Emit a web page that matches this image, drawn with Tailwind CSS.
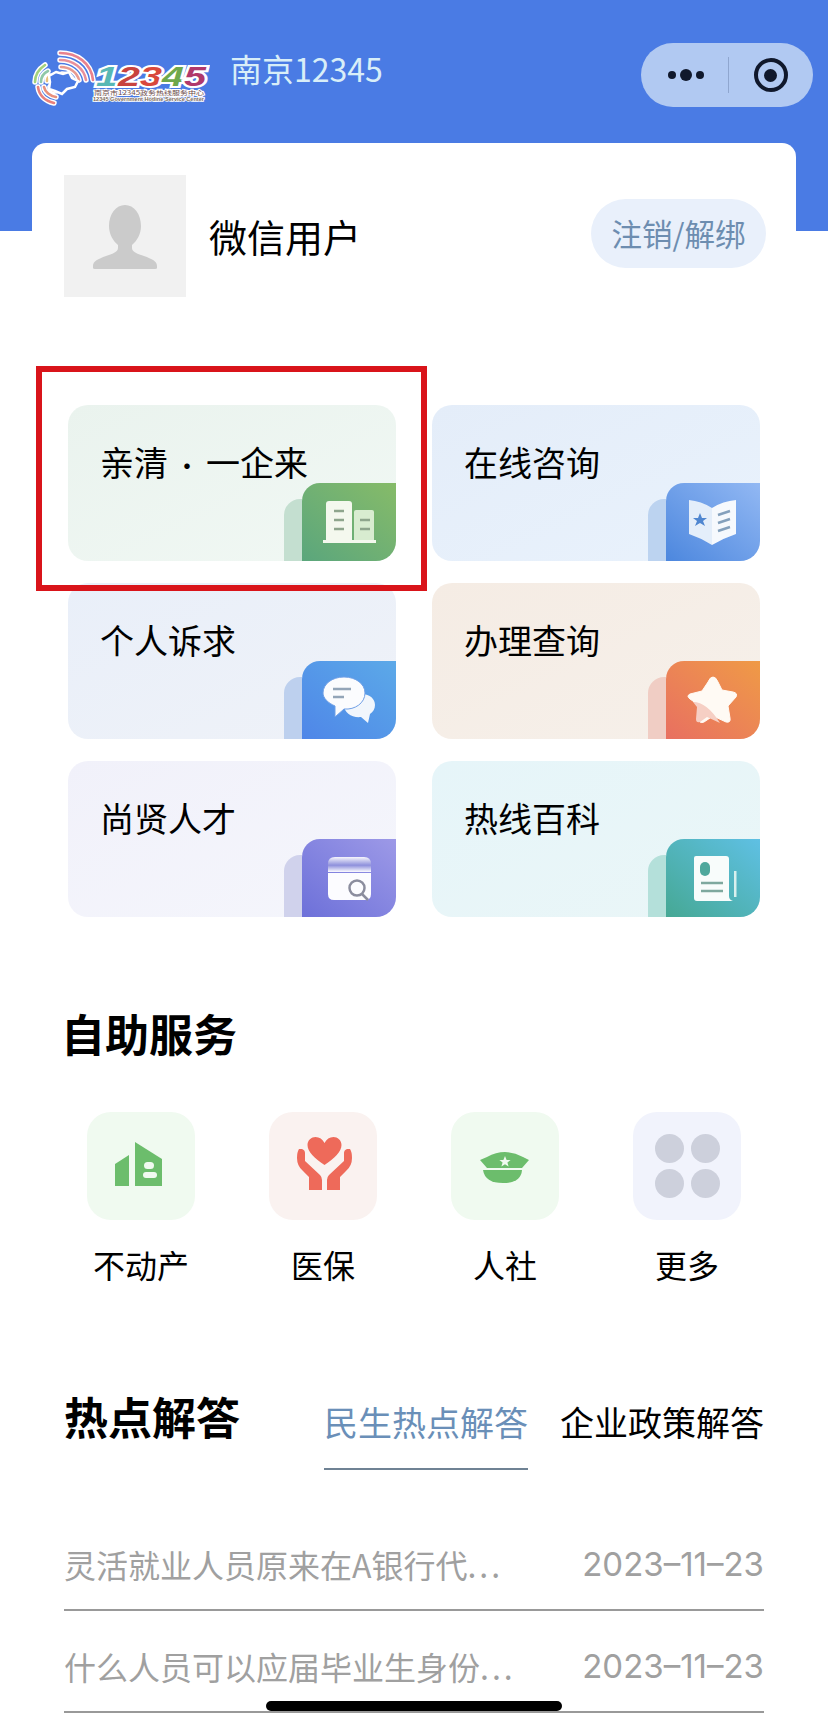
<!DOCTYPE html>
<html lang="zh-CN">

<head>
    <meta charset="UTF-8" />
    <meta name="viewport" content="width=device-width, initial-scale=1.0" />
    <title>南京12345</title>
    <script src="https://cdn.jsdelivr.net/npm/@tailwindcss/browser@4"></script>
</head>

<body class="bg-white text-black font-['Noto_Sans_CJK_SC','Noto_Sans',sans-serif]">
    <div class="relative w-[828px] h-[1727px] overflow-hidden bg-white">

        <!-- header -->
        <header class="flex items-start h-[231px] bg-[#4a7be4] pl-[30px] pr-[15px] pt-[43px]">
            <svg class="w-[180px] h-[60px] mt-[5px] shrink-0" viewBox="0 0 180 60" fill="none">
                <g stroke="#fff" stroke-width="5.5" stroke-linecap="round">
                    <path d="M30 5C47 5 61 15 63 32M30 12C43 12 54 20 56 32M31 19C39 19 47 24 49 32M32 26C37 26 41 28 43 32" />
                    <path d="M5 34C5 27 9 21 15 17M11 34C11 29 14 25 18 23M17 33C17 31 18 29 20 28" />
                    <path d="M8 39C9 47 15 53 24 55M14 39C15 44 20 48 26 49M20 39C21 41 23 43 26 43" />
                </g>
                <g stroke-width="2.6" stroke-linecap="round">
                    <path stroke="#e8828e" d="M30 5C47 5 61 15 63 32" />
                    <path stroke="#e8909c" d="M30 12C43 12 54 20 56 32" />
                    <path stroke="#e89a90" d="M31 19C39 19 47 24 49 32" />
                    <path stroke="#e8a08c" d="M32 26C37 26 41 28 43 32" />
                    <path stroke="#a4d27c" d="M5 34C5 27 9 21 15 17" />
                    <path stroke="#8fc8a8" d="M11 34C11 29 14 25 18 23" />
                    <path stroke="#e8c07c" d="M17 33C17 31 18 29 20 28" />
                    <path stroke="#e8807c" d="M8 39C9 47 15 53 24 55" />
                    <path stroke="#e8907c" d="M14 39C15 44 20 48 26 49" />
                    <path stroke="#e8a07c" d="M20 39C21 41 23 43 26 43" />
                </g>
                <path d="M26 24l7 2 6-2 3 6 6 3-3 6-8 2-5 5-7-3-6-2 1-7-1-6z" fill="#4a7be4" stroke="#fff" stroke-width="2.5" />
                <text x="66" y="38" stroke="#fff" stroke-width="4" paint-order="stroke" textLength="110" lengthAdjust="spacingAndGlyphs" class="font-['Liberation_Sans',sans-serif] italic font-bold text-[27px]"><tspan fill="#58b8b4">1</tspan><tspan fill="#c8433f">2</tspan><tspan fill="#d8483c">3</tspan><tspan fill="#6fa84c">4</tspan><tspan fill="#b0386c">5</tspan></text>
                <text x="64" y="47" fill="#6c4a4a" stroke="#fff" stroke-width="2" paint-order="stroke" textLength="110" lengthAdjust="spacingAndGlyphs" class="text-[6px]">南京市12345政务热线服务中心</text>
                <text x="63" y="52.5" fill="#7c6a5a" stroke="#fff" stroke-width="1.5" paint-order="stroke" textLength="111" lengthAdjust="spacingAndGlyphs" class="font-['Liberation_Sans',sans-serif] font-bold text-[4.5px]">12345 Government Hotline Service Center</text>
            </svg>
            <span class="ml-[20px] text-[#d8eef8] text-[32px] leading-[50px]">南京12345</span>

            <!-- capsule -->
            <div class="ml-auto flex items-center w-[172px] h-[64px] rounded-full bg-[#b1c9f2]">
                <div class="flex items-center justify-center gap-[4px] w-[87px] pl-[2px]">
                    <span class="w-[8px] h-[8px] rounded-full bg-[#10182c]"></span>
                    <span class="w-[12px] h-[12px] rounded-full bg-[#10182c]"></span>
                    <span class="w-[8px] h-[8px] rounded-full bg-[#10182c]"></span>
                </div>
                <span class="w-px h-[36px] bg-[#8fa6cf]"></span>
                <div class="flex flex-1 items-center justify-center pr-[1px]">
                    <span class="flex items-center justify-center w-[34px] h-[34px] rounded-full border-[4px] border-[#10182c]">
                        <span class="w-[13px] h-[13px] rounded-full bg-[#10182c]"></span>
                    </span>
                </div>
            </div>
        </header>

        <!-- user card -->
        <section class="relative -mt-[88px] ml-[32px] w-[764px] h-[262px] rounded-t-[14px] bg-white pl-[32px] pr-[30px] pt-[32px]">
            <div class="flex items-center">
                <div class="w-[122px] h-[122px] bg-[#f1f1f1]">
                    <svg class="w-full h-full" viewBox="0 0 122 122" fill="#cbcbcb">
                        <path d="M61 30c-9 0-16 9-16 21 0 8 4 15 9 19v3c0 4-6 6-12 8-8 3-13 5-13 10v2q0 1 2 1h60q2 0 2-1v-2c0-5-5-7-13-10-6-2-12-4-12-8v-3c5-4 9-11 9-19 0-12-7-21-16-21z" />
                    </svg>
                </div>
                <span class="ml-[23px] text-[38px] leading-[50px]">微信用户</span>
                <button class="ml-auto w-[175px] h-[69px] -mt-[5px] rounded-full bg-[#e9f0fb] text-[#6d8db0] text-[30.5px] leading-[69px]">注销/解绑</button>
            </div>
        </section>

        <!-- entry cards -->
        <main class="grid grid-cols-[328px_328px] gap-x-[36px] gap-y-[22px] ml-[68px]">

            <a class="relative block h-[156px] overflow-hidden rounded-[20px] bg-linear-to-br from-[#eaf3ee] to-[#f1f8f4] pl-[32px] pt-[30px] text-[34px] leading-[54px]">
                亲清<span class="inline-block w-[38px] text-center text-[26px]">·</span>一企来
                <span class="absolute right-[94px] bottom-0 w-[18px] h-[62px] rounded-tl-[16px] bg-[#c4dfd0]"></span>
                <span class="absolute right-0 bottom-0 w-[94px] h-[78px] rounded-tl-[18px] bg-linear-to-tr from-[#5aa67c] to-[#86bb68]">
                    <svg class="w-full h-full" viewBox="0 0 94 78">
                        <path d="M24 21q0-3 3-3h20q3 0 3 3v38H24z" fill="#f4f8ee" />
                        <path d="M52 29q0-2 2-2h16q2 0 2 2v30H52z" fill="#d8ecd0" />
                        <path d="M21 57h53v3H21z" fill="#f4f8ee" />
                        <path d="M32 28h10M32 37h10M32 46h10M58 37h10M58 46h10" stroke="#8ea58c" stroke-width="2.5" />
                    </svg>
                </span>
            </a>

            <a class="relative block h-[156px] overflow-hidden rounded-[20px] bg-linear-to-br from-[#e4edf9] to-[#e9f2fc] pl-[32px] pt-[30px] text-[34px] leading-[54px]">
                在线咨询
                <span class="absolute right-[94px] bottom-0 w-[18px] h-[62px] rounded-tl-[16px] bg-[#bcd3f0]"></span>
                <span class="absolute right-0 bottom-0 w-[94px] h-[78px] rounded-tl-[18px] bg-linear-to-tr from-[#4c87de] to-[#92b8f3]">
                    <svg class="w-full h-full" viewBox="0 0 94 78">
                        <path d="M23 17q12 1 23 8v37q-11-7-23-11z" fill="#e4eefa" />
                        <path d="M70 17q-13 1-24 8v37q12-7 24-11z" fill="#f6f9fd" />
                        <path d="M34 30l2 5h5l-4 3 2 5-5-3-5 3 2-5-4-3h5z" fill="#4f86d0" />
                        <path d="M52 32l12-4M52 40l12-4M52 48l12-4" stroke="#84a0bc" stroke-width="2.5" />
                    </svg>
                </span>
            </a>

            <a class="relative block h-[156px] overflow-hidden rounded-[20px] bg-linear-to-br from-[#e9eff9] to-[#eff2f8] pl-[32px] pt-[30px] text-[34px] leading-[54px]">
                个人诉求
                <span class="absolute right-[94px] bottom-0 w-[18px] h-[62px] rounded-tl-[16px] bg-[#bdd0ee]"></span>
                <span class="absolute right-0 bottom-0 w-[94px] h-[78px] rounded-tl-[18px] bg-linear-to-tr from-[#4f86e8] to-[#5ca9e8]">
                    <svg class="w-full h-full" viewBox="0 0 94 78">
                        <path d="M60 33c8 0 13 5 13 11 0 4-2 7-5 9l-2 9-7-6c-9 1-17-4-17-12 0-6 8-11 18-11z" fill="#f1f6fc" />
                        <path d="M42 16c12 0 21 7 21 16 0 10-10 17-21 16l-9 8 0-11c-7-3-12-8-12-13 0-9 9-16 21-16z" fill="#fbfcfe" stroke="#6f9fe6" stroke-width="1" />
                        <path d="M31 28h18M31 36h11" stroke="#93a5b8" stroke-width="2.5" />
                    </svg>
                </span>
            </a>

            <a class="relative block h-[156px] overflow-hidden rounded-[20px] bg-linear-to-br from-[#f5ece4] to-[#f6f0ea] pl-[32px] pt-[30px] text-[34px] leading-[54px]">
                办理查询
                <span class="absolute right-[94px] bottom-0 w-[18px] h-[62px] rounded-tl-[16px] bg-[#f0cdc4]"></span>
                <span class="absolute right-0 bottom-0 w-[94px] h-[78px] rounded-tl-[18px] bg-linear-to-tr from-[#e86f60] to-[#ef9a45]">
                    <svg class="w-full h-full" viewBox="0 0 94 78">
                        <path d="M47 16q3 0 5 5l4 8 11 2q5 1 3 5l-8 9 2 12q1 5-4 4l-13-6-9 6q-5 2-5-3l1-13-10-7q-4-3 0-5l12-3 6-9q2-5 5-5z" fill="#fffaf4" stroke="#fffaf4" stroke-width="1" stroke-linejoin="round" />
                        <path d="M27 41q14 0 27 21l-13-6-7 5q-4 1-4-3l1-12z" fill="#f6cfc4" />
                    </svg>
                </span>
            </a>

            <a class="relative block h-[156px] overflow-hidden rounded-[20px] bg-linear-to-br from-[#f1f1fa] to-[#f5f6fc] pl-[32px] pt-[30px] text-[34px] leading-[54px]">
                尚贤人才
                <span class="absolute right-[94px] bottom-0 w-[18px] h-[62px] rounded-tl-[16px] bg-[#d0d2ec]"></span>
                <span class="absolute right-0 bottom-0 w-[94px] h-[78px] rounded-tl-[18px] bg-linear-to-tr from-[#6d70d9] to-[#9d99e7]">
                    <svg class="w-full h-full" viewBox="0 0 94 78">
                        <defs>
                            <linearGradient id="band" x1="0" y1="0" x2="0" y2="1">
                                <stop offset="0" stop-color="#f6f6fc" />
                                <stop offset="0.55" stop-color="#8e90dc" />
                                <stop offset="1" stop-color="#fcfcff" />
                            </linearGradient>
                        </defs>
                        <path d="M33 18h29q7 0 7 7v8H26v-8q0-7 7-7z" fill="url(#band)" />
                        <path d="M26 34h43v21q0 6-6 6H32q-6 0-6-6z" fill="#fcfcff" />
                        <circle cx="55" cy="49" r="7.5" fill="none" stroke="#8b8d9e" stroke-width="2.5" />
                        <path d="M60 55l6 6" stroke="#8b8d9e" stroke-width="2.5" />
                    </svg>
                </span>
            </a>

            <a class="relative block h-[156px] overflow-hidden rounded-[20px] bg-linear-to-br from-[#e6f5f9] to-[#eaf6f7] pl-[32px] pt-[30px] text-[34px] leading-[54px]">
                热线百科
                <span class="absolute right-[94px] bottom-0 w-[18px] h-[62px] rounded-tl-[16px] bg-[#b4e0da]"></span>
                <span class="absolute right-0 bottom-0 w-[94px] h-[78px] rounded-tl-[18px] bg-linear-to-tr from-[#46a894] to-[#5fc0e4]">
                    <svg class="w-full h-full" viewBox="0 0 94 78">
                        <path d="M30 17h30q3 0 3 3v37q0 4 4 5H31q-3 0-3-3V19q0-2 2-2z" fill="#f8fcfb" />
                        <path d="M68 32h2.5v26H68z" fill="#d8f0ee" />
                        <rect x="34" y="23" width="10" height="14" rx="5" fill="#4ea89c" />
                        <path d="M35 44h22M35 52h22" stroke="#7ea89e" stroke-width="2.5" />
                    </svg>
                </span>
            </a>
        </main>

        <!-- self service -->
        <h2 class="mt-[86px] ml-[61px] text-[44px] leading-[60px] font-bold">自助服务</h2>
        <div class="grid grid-cols-[108px_108px_108px_108px] gap-x-[74px] ml-[87px] mt-[49px]">
            <div class="flex flex-col items-center">
                <div class="w-[108px] h-[108px] rounded-[24px] bg-[#f0faf0]">
                    <svg class="w-full h-full" viewBox="0 0 108 108">
                        <path d="M28 52l14-9v31H28z" fill="#6cbd6c" />
                        <path d="M48 30l27 17v27H48z" fill="#6cbd6c" />
                        <rect x="57" y="50" width="10" height="7" rx="3.5" fill="#f0faf0" />
                        <rect x="56" y="60" width="14" height="6" rx="3" fill="#f0faf0" />
                    </svg>
                </div>
                <span class="mt-[24px] text-[32px] leading-[40px] whitespace-nowrap">不动产</span>
            </div>
            <div class="flex flex-col items-center">
                <div class="w-[108px] h-[108px] rounded-[24px] bg-[#faf2f0]">
                    <svg class="w-full h-full" viewBox="0 0 108 108" fill="#ee6a5a">
                        <path transform="translate(1.5 0)" d="M54 53C44 46 37 40 37 33c0-5 4-8 8-8 4 0 7 2 9 6 2-4 5-6 9-6 4 0 8 3 8 8 0 7-7 13-17 20z" />
                        <path d="M30 37q-2 3-2 9 0 8 6 13l6 6v13h13V68q0-3-2-5L36 49v-8q0-3-3-4z" />
                        <path transform="translate(111 0) scale(-1 1)" d="M30 37q-2 3-2 9 0 8 6 13l6 6v13h13V68q0-3-2-5L36 49v-8q0-3-3-4z" />
                    </svg>
                </div>
                <span class="mt-[24px] text-[32px] leading-[40px] whitespace-nowrap">医保</span>
            </div>
            <div class="flex flex-col items-center">
                <div class="w-[108px] h-[108px] rounded-[24px] bg-[#f0faf0]">
                    <svg class="w-full h-full" viewBox="0 0 108 108" fill="#6cbd6c">
                        <path d="M36 45q18-10 36 0l6 3-7 8H36l-7-8z" />
                        <path d="M32 58h39q-1 13-19 13T32 58z" />
                        <path d="M54 44l1.6 4h4l-3.2 2.6 1.2 4-3.6-2.4-3.6 2.4 1.2-4-3.2-2.6h4z" fill="#f0faf0" />
                    </svg>
                </div>
                <span class="mt-[24px] text-[32px] leading-[40px] whitespace-nowrap">人社</span>
            </div>
            <div class="flex flex-col items-center">
                <div class="grid grid-cols-[29px_29px] content-center justify-center gap-x-[7px] gap-y-[6px] w-[108px] h-[108px] rounded-[24px] bg-[#f1f3fc]">
                    <span class="w-[29px] h-[29px] rounded-full bg-[#cdd0dc]"></span>
                    <span class="w-[29px] h-[29px] rounded-full bg-[#cdd0dc]"></span>
                    <span class="w-[29px] h-[29px] rounded-full bg-[#cdd0dc]"></span>
                    <span class="w-[29px] h-[29px] rounded-full bg-[#cdd0dc]"></span>
                </div>
                <span class="mt-[24px] text-[32px] leading-[40px] whitespace-nowrap">更多</span>
            </div>
        </div>

        <!-- hot answers -->
        <section class="mt-[102px] mx-[64px]">
            <div class="flex items-start">
                <h2 class="text-[44px] leading-[60px] font-bold">热点解答</h2>
                <div class="ml-[84px] mt-[13px] w-[204px] h-[71px] border-b-2 border-[#6f8294] text-center text-[34px] leading-[46px] text-[#6a8fb8] whitespace-nowrap">民生热点解答</div>
                <div class="ml-[32px] mt-[13px] text-[34px] leading-[46px] whitespace-nowrap">企业政策解答</div>
            </div>
            <ul class="mt-[39px] w-[700px] text-[#a0a0a0] text-[32px] leading-[40px]">
                <li class="flex justify-between h-[102px] pt-[35px] border-b-2 border-[#999]">
                    <span class="whitespace-nowrap">灵活就业人员原来在A银行代<span class="tracking-[3px]">...</span></span>
                    <span class="font-['Inter',sans-serif] text-[33px]">2023–11–23</span>
                </li>
                <li class="flex justify-between h-[102px] pt-[35px] border-b-2 border-[#999]">
                    <span class="whitespace-nowrap">什么人员可以应届毕业生身份<span class="tracking-[3px]">...</span></span>
                    <span class="font-['Inter',sans-serif] text-[33px]">2023–11–23</span>
                </li>
            </ul>
        </section>

        <!-- red highlight box -->
        <div class="absolute left-[36px] top-[366px] w-[391px] h-[225px] border-[6px] border-[#d9141a]"></div>
        <!-- home indicator -->
        <div class="absolute left-[266px] top-[1701px] w-[296px] h-[10px] rounded-full bg-black"></div>
    </div>
</body>

</html>
